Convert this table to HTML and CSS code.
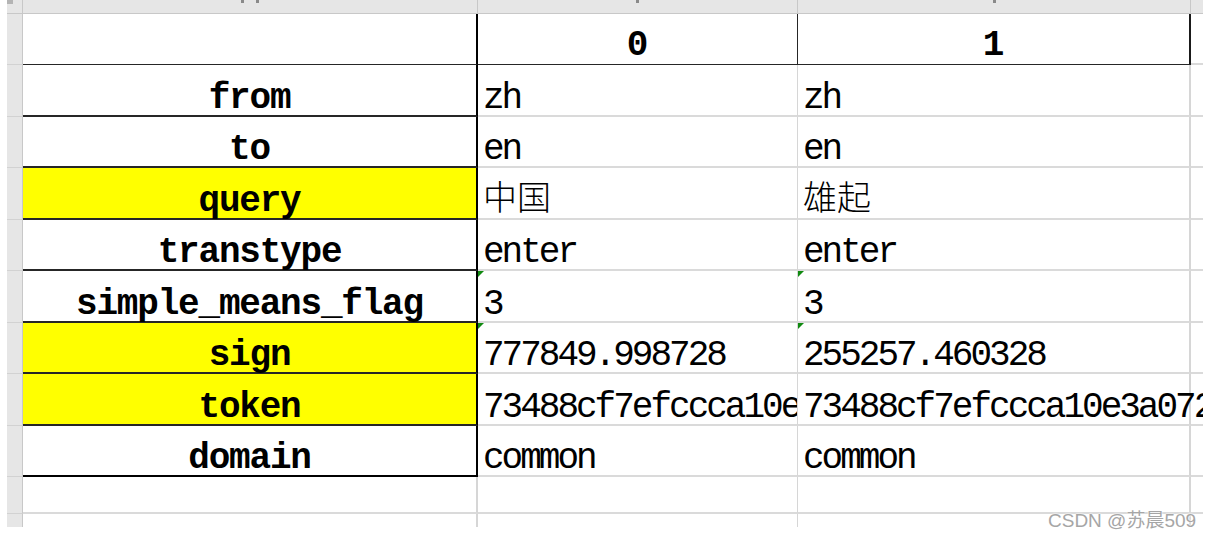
FILE: index.html
```html
<!DOCTYPE html>
<html lang="zh">
<head>
<meta charset="utf-8">
<link rel="stylesheet" href="styles.css">
</head>
<body>
<div class="page">
  <div class="sheet">
    <div class="corner"><span class="corner-mark"></span></div>
    <div class="colhead"><span class="tick"></span><span class="tick"></span></div>
    <div class="colhead"><span class="tick"></span></div>
    <div class="colhead"><span class="tick"></span></div>
    <div class="colhead colhead-last"></div>

    <div class="rowhead"></div>
    <div class="label label-top"></div>
    <div class="head-val">0</div>
    <div class="head-val head-val-last">1</div>
    <div class="extra"></div>

    <div class="rowhead"></div>
    <div class="label">from</div>
    <div class="val">zh</div>
    <div class="val val-last">zh</div>
    <div class="extra"></div>

    <div class="rowhead"></div>
    <div class="label">to</div>
    <div class="val">en</div>
    <div class="val val-last">en</div>
    <div class="extra"></div>

    <div class="rowhead"></div>
    <div class="label label-hl">query</div>
    <div class="val"><span class="cjk">中国</span></div>
    <div class="val val-last"><span class="cjk">雄起</span></div>
    <div class="extra"></div>

    <div class="rowhead"></div>
    <div class="label">transtype</div>
    <div class="val">enter</div>
    <div class="val val-last">enter</div>
    <div class="extra"></div>

    <div class="rowhead"></div>
    <div class="label">simple_means_flag</div>
    <div class="val val-flag">3</div>
    <div class="val val-last val-flag">3</div>
    <div class="extra"></div>

    <div class="rowhead"></div>
    <div class="label label-hl">sign</div>
    <div class="val val-flag">777849.998728</div>
    <div class="val val-last val-flag">255257.460328</div>
    <div class="extra"></div>

    <div class="rowhead"></div>
    <div class="label label-hl">token</div>
    <div class="val val-clip">73488cf7efccca10e3a072b1a4e4cd58</div>
    <div class="val val-last">73488cf7efccca10e3a072b1a4e4cd58</div>
    <div class="extra"></div>

    <div class="rowhead"></div>
    <div class="label label-end">domain</div>
    <div class="val">common</div>
    <div class="val val-last">common</div>
    <div class="extra"></div>

    <div class="rowhead"></div>
    <div class="blank blank-label"></div>
    <div class="blank"></div>
    <div class="blank blank-last"></div>
    <div class="extra"></div>

    <div class="rowhead rowhead-end"></div>
    <div class="blank blank-label blank-end"></div>
    <div class="blank blank-end"></div>
    <div class="blank blank-last blank-end"></div>
    <div class="extra blank-end"></div>
  </div>
  <div class="watermark">CSDN @苏晨509</div>
</div>
</body>
</html>
```

FILE: styles.css
```css
* { box-sizing: border-box; }

html, body {
  margin: 0;
  padding: 0;
  background: #ffffff;
}

.page {
  position: relative;
  width: 1211px;
  height: 535px;
  overflow: hidden;
}

.sheet {
  margin-left: 7px;
  width: 1196px;
  height: 527px;
  overflow: hidden;
  display: grid;
  grid-template-columns: 16px 455px 320px 393px 12px;
  grid-template-rows: 14px 51px 52px 51px 52px 51px 52px 51px 52px 51px 37px 14px;
  font-family: "Liberation Mono", "Noto Sans CJK SC", monospace;
  color: #000;
}

.corner {
  position: relative;
  background: #e6e6e6;
  border-right: 1px solid #c8c8c8;
  border-bottom: 1px solid #c8c8c8;
}

.corner-mark {
  position: absolute;
  left: 0;
  top: 0;
  width: 6px;
  height: 4px;
  background: #b4b4b4;
}

.colhead {
  background: #e6e6e6;
  border-right: 1px solid #c8c8c8;
  border-bottom: 1px solid #c8c8c8;
  display: flex;
  justify-content: center;
  align-items: flex-start;
  gap: 12px;
}

.colhead-last { border-right: none; }

.tick {
  width: 3px;
  height: 3px;
  background: #8a8a8a;
}

.rowhead {
  background: #e6e6e6;
  border-right: 1px solid #c8c8c8;
  border-bottom: 1px solid #d2d2d2;
}

.rowhead-end { border-bottom: none; }

.label {
  display: flex;
  justify-content: center;
  align-items: flex-end;
  font-weight: bold;
  font-size: 36px;
  letter-spacing: -1.2px;
  line-height: 30px;
  padding-bottom: 1px;
  white-space: nowrap;
  background: #ffffff;
  border-right: 2px solid #000;
  border-bottom: 2px solid #262626;
}

.label-top { border-bottom: 1px solid #262626; }

.label-hl { background: #ffff00; }

.label-end { border-bottom: 2px solid #000; }

.head-val {
  display: flex;
  justify-content: center;
  align-items: flex-end;
  font-weight: bold;
  font-size: 36px;
  line-height: 36px;
  padding-bottom: 0;
  background: #ffffff;
  border-right: 1px solid #262626;
  border-bottom: 1px solid #262626;
}

.head-val-last { border-right: 2px solid #1a1a1a; }

.val {
  position: relative;
  display: flex;
  align-items: flex-end;
  padding-left: 5px;
  padding-bottom: 1px;
  font-size: 36px;
  letter-spacing: -3px;
  line-height: 30px;
  white-space: nowrap;
  border-right: 1px solid #d6d6d6;
  border-bottom: 2px solid #dadada;
}

.val-clip { overflow: hidden; }

.val-last {
  border-right: 2px solid #d6d6d6;
}

.val-flag::before {
  content: "";
  position: absolute;
  left: 0;
  top: 0;
  border-top: 6px solid #118a11;
  border-right: 6px solid transparent;
}

.cjk {
  font-family: "Noto Sans CJK SC", sans-serif;
  font-weight: 300;
  font-size: 34px;
  letter-spacing: 0;
  line-height: 36px;
  margin-bottom: 3px;
}

.extra {
  border-bottom: 2px solid #dadada;
}

.blank {
  border-right: 1px solid #d6d6d6;
  border-bottom: 2px solid #dadada;
}

.blank-label { border-right: 2px solid #d6d6d6; }

.blank-last { border-right: 2px solid #d6d6d6; }

.blank-end { border-bottom: none; }

.watermark {
  position: absolute;
  left: 1048px;
  top: 505px;
  font-family: "Liberation Sans", "Noto Sans CJK SC", sans-serif;
  font-size: 19px;
  color: #a6a6a6;
  text-shadow: 0 0 2px #ffffff, 0 0 2px #ffffff;
  white-space: nowrap;
}
```
